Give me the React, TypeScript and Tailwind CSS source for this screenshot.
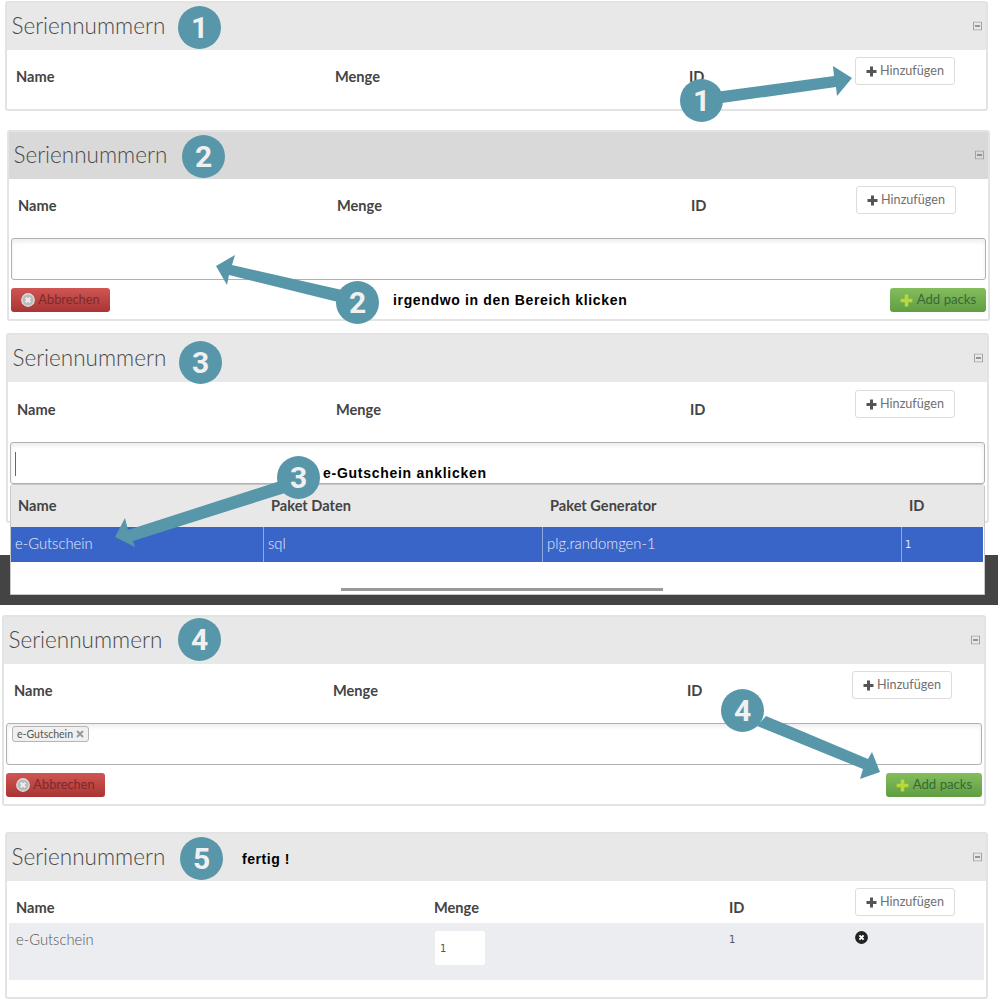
const font = "font-['Lato','Liberation_Sans',sans-serif]";

function CollapseIcon() {
  return (
    <svg width="9" height="9" viewBox="0 0 9 9" className="shrink-0 -translate-y-[0.5px]">
      <rect x="0.5" y="0.5" width="8" height="8" fill="none" stroke="#a3a3a3" strokeWidth="1" />
      <rect x="2" y="3.7" width="5" height="1.6" fill="#808080" />
    </svg>
  );
}

function PlusIcon({ color = "#555", size = 11 }: { color?: string; size?: number }) {
  return (
    <svg width={size} height={size} viewBox="0 0 11 11" className="shrink-0">
      <path d="M4 0.5h3v3.5h3.5v3H7v3.5H4V7H0.5V4H4z" fill={color} />
    </svg>
  );
}

function CloseDot({ size = 13, bg = "#222", fg = "#fff", ring }: { size?: number; bg?: string; fg?: string; ring?: string }) {
  return (
    <svg width={size} height={size} viewBox="0 0 13 13" className="shrink-0">
      <circle cx="6.5" cy="6.5" r="5.8" fill={bg} stroke={ring ?? bg} strokeWidth="1.2" />
      <path d="M4.4 4.4l4.2 4.2M8.6 4.4l-4.2 4.2" stroke={fg} strokeWidth="2" />
    </svg>
  );
}

function AddButton() {
  return (
    <button className="flex h-[28px] w-[100px] items-center justify-center gap-[3px] rounded-[3px] border border-[#dcdcdc] bg-white text-[12.6px] font-normal text-[#707070]">
      <PlusIcon />
      <span>Hinzufügen</span>
    </button>
  );
}

function Label({ className, children }: { className?: string; children: React.ReactNode }) {
  return <div className={`text-[14.6px] font-bold leading-[20px] text-[#444] ${className ?? ""}`}>{children}</div>;
}

function HeadRow({ inset = "pl-[9px]" }: { inset?: string }) {
  return (
    <div className={`flex h-[59px] pt-[7px] ${inset}`}>
      <Label className="mt-[10px] w-[319px]">Name</Label>
      <Label className="mt-[10px] w-[354px]">Menge</Label>
      <Label className="mt-[10px] w-[165px]">ID</Label>
      <AddButton />
    </div>
  );
}

function Panel({
  className,
  headerClass = "bg-[#e8e8e8]",
  children,
}: {
  className?: string;
  headerClass?: string;
  children: React.ReactNode;
}) {
  return (
    <section className={`w-[983px] rounded-[3px] border-2 border-[#e3e3e3] bg-white ${className ?? ""}`}>
      <header className={`flex h-[47px] items-center justify-between pl-[4.5px] pr-[4px] ${headerClass}`}>
        <h2 className="text-[22.5px] font-light leading-none text-[#4a4a4a]">Seriennummern</h2>
        <CollapseIcon />
      </header>
      {children}
    </section>
  );
}

function TagInput({ children }: { children?: React.ReactNode }) {
  return (
    <div className="mx-[2px] h-[42px] rounded-[3px] border border-[#b0b0b0] bg-white shadow-[inset_0_3px_4px_rgba(0,0,0,0.07)]">
      {children}
    </div>
  );
}

function Footer() {
  return (
    <div className="mx-[2px] mt-[8px] flex h-[24px] items-center justify-between">
      <button className="flex h-[24px] w-[99px] items-center justify-center gap-[3px] rounded-[3px] bg-gradient-to-b from-[#cf5653] to-[#a93433] text-[12.8px] text-[#7d2a2a]">
        <CloseDot size={14} bg="#bbb" fg="#eee" ring="#ddd" />
        <span>Abbrechen</span>
      </button>
      <button className="flex h-[24px] w-[96px] items-center justify-center gap-[4px] rounded-[3px] bg-gradient-to-b from-[#84bd5c] to-[#5f9e43] text-[13.2px] text-[#38683a]">
        <PlusIcon color="#b9d83c" size={13} />
        <span>Add packs</span>
      </button>
    </div>
  );
}

function Dropdown() {
  const th = "flex items-center pb-[1px] text-[14.6px] font-bold text-[#444] pl-[7px]";
  const td = "flex items-center pb-[2px] pl-[4px] font-light text-[#e6ecfa] text-[14.8px] border-r border-[#8fa8e2]";
  return (
    <div className="absolute left-0 right-0 top-full h-[111px] rounded-t-[3px] border border-[#c8c8c8] bg-white">
      <div className="grid h-[42px] grid-cols-[253px_279px_359px_1fr] bg-[#e8e8e8]">
        <div className={th}>Name</div>
        <div className={th}>Paket Daten</div>
        <div className={th}>Paket Generator</div>
        <div className={th}>ID</div>
      </div>
      <div className="mr-[1px] grid h-[35px] grid-cols-[253px_279px_359px_1fr] bg-[#3a65c8]">
        <div className={td}>e-Gutschein</div>
        <div className={td}>sql</div>
        <div className={td}>plg.randomgen-1</div>
        <div className="flex items-center pl-[3px] font-['DejaVu_Sans',sans-serif] text-[10px] text-[#e6ecfa]">1</div>
      </div>
      <div className="ml-[330px] mt-[26px] h-[3px] w-[322px] bg-[#999]" />
    </div>
  );
}

const bubbles = [
  { n: "1", c: "left-[178px] top-[6px]" },
  { n: "1", c: "left-[680px] top-[79px]" },
  { n: "2", c: "left-[182px] top-[135px]" },
  { n: "2", c: "left-[336px] top-[281px]" },
  { n: "3", c: "left-[179px] top-[341px]" },
  { n: "3", c: "left-[277px] top-[456px]" },
  { n: "4", c: "left-[178px] top-[618px]" },
  { n: "4", c: "left-[721px] top-[689px]" },
  { n: "5", c: "left-[180px] top-[837px]" },
];

function Annotations() {
  const note = "absolute font-['Liberation_Sans',sans-serif] text-[14px] font-bold leading-[18px] text-black";
  return (
    <>
      <svg width="1000" height="1002" className="pointer-events-none absolute left-0 top-0">
        <g fill="#5797a9">
          <polygon points="715,92 834,76 833,66 852,78 837,96 836,87 715,104" />
          <polygon points="216,266 235,255 232,265 342,290 342,303 229,275 227,285" />
          <polygon points="115,537 125,518 128,530 280,481 285,493 133,541 135,547" />
          <polygon points="880,772 860,779 863,769 757,726 766,716 868,759 872,752" />
        </g>
      </svg>
      {bubbles.map((b, i) => (
        <div
          key={i}
          className={`absolute flex h-[43px] w-[43px] items-center justify-center rounded-full bg-[#5797a9] font-['Roboto',sans-serif] text-[30px] font-bold text-[#f0f0f0] ${b.c}`}
        >
          {b.n}
        </div>
      ))}
      <div className={`${note} left-[393px] top-[291px] tracking-[0.66px]`}>irgendwo in den Bereich klicken</div>
      <div className={`${note} left-[323px] top-[464px] tracking-[0.72px]`}>e-Gutschein anklicken</div>
      <div className={`${note} left-[242px] top-[850px] tracking-[0.55px]`}>fertig !</div>
    </>
  );
}

export default function App() {
  return (
    <div className={`relative flex h-[1002px] w-[1000px] flex-col overflow-hidden bg-white ${font}`}>
      <Panel className="ml-[5px] mt-[1px] h-[110px]">
        <div className="flex h-[59px] pl-[9px] pt-[7px]">
          <Label className="mt-[10px] w-[319px]">Name</Label>
          <Label className="mt-[10px] w-[354px]">Menge</Label>
          <Label className="mt-[10px] w-[166px]">ID</Label>
          <AddButton />
        </div>
      </Panel>

      <Panel className="ml-[7px] mt-[19px] h-[191px]" headerClass="bg-[#d9d9d9]">
        <HeadRow />
        <TagInput />
        <Footer />
      </Panel>

      <Panel className="ml-[6px] mt-[12px] h-[190px]">
        <div className="h-[1px]" />
        <HeadRow />
        <div className="relative">
          <TagInput>
            <div className="ml-[4px] mt-[9px] h-[24px] w-[1px] bg-[#666]" />
          </TagInput>
          <div className="absolute left-[2px] right-[2px] top-full">
            <Dropdown />
          </div>
        </div>
      </Panel>

      <div className="mt-[32px] h-[50px] w-[998px] shrink-0 bg-[#444]" />

      <Panel className="ml-[2px] mt-[10px] h-[191px] w-[984px]">
        <HeadRow inset="pl-[10px]" />
        <TagInput>
          <div className="ml-[5px] mt-[2px] flex h-[16px] w-[77px] items-center justify-center gap-[3px] rounded-[3px] border border-[#b5b5b5] bg-[#f0f0f0] text-[10.5px] leading-none text-[#555]">
            <span>e-Gutschein</span>
            <svg width="8" height="8" viewBox="0 0 8 8">
              <path d="M1 1l6 6M7 1l-6 6" stroke="#999" strokeWidth="2" />
            </svg>
          </div>
        </TagInput>
        <Footer />
      </Panel>

      <Panel className="ml-[5px] mt-[26px] h-[167px]">
        <div className="flex h-[42px] pl-[9px] pt-[7px]">
          <Label className="mt-[10px] w-[418px]">Name</Label>
          <Label className="mt-[10px] w-[295px]">Menge</Label>
          <Label className="mt-[10px] w-[126px]">ID</Label>
          <AddButton />
        </div>
        <div className="mx-[2px] flex h-[57px] bg-[#ecedf0] pl-[7px]">
          <div className="mt-[8px] w-[418px] text-[14.8px] font-light leading-[17px] text-[#555]">e-Gutschein</div>
          <div className="w-[295px] pl-[1px] pt-[8px]">
            <div className="flex h-[34px] w-[50px] items-center rounded-[3px] bg-white pl-[5px] font-['DejaVu_Sans',sans-serif] text-[10px] text-[#555]">
              1
            </div>
          </div>
          <div className="mt-[10px] w-[126px] font-['DejaVu_Sans',sans-serif] text-[10px] leading-[14px] text-[#555]">1</div>
          <div className="mt-[8px]">
            <CloseDot />
          </div>
        </div>
      </Panel>

      <Annotations />
    </div>
  );
}
